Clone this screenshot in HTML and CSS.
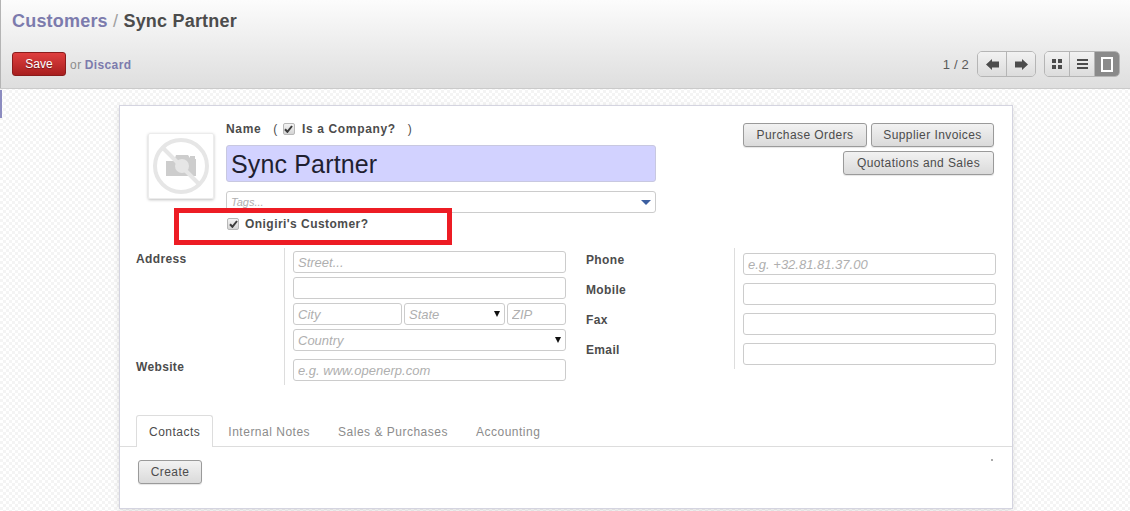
FILE: index.html
```html
<!DOCTYPE html>
<html lang="en">
<head>
  <meta charset="UTF-8">
  <title>Sync Partner</title>
  <link rel="stylesheet" href="styles.css">
</head>
<body>
  <header class="header">
    <h1 class="title"><a class="link">Customers</a> <span class="slash">/</span> Sync Partner</h1>
    <div class="actions">
      <div class="save-group">
        <button class="btn-save">Save</button>
        <span class="or">or</span>
        <a class="link discard">Discard</a>
      </div>
      <div class="pager">
        <span class="pager-text">1 / 2</span>
        <div class="btn-group arrows">
          <button class="tool">
            <svg width="13" height="11" viewBox="0 0 13 11"><path d="M0 5.5 6 0V2.5H13V8.5H6V11Z" fill="#4c4c4c"/></svg>
          </button>
          <button class="tool">
            <svg width="13" height="11" viewBox="0 0 13 11"><path d="M13 5.5 7 0V2.5H0V8.5H7V11Z" fill="#4c4c4c"/></svg>
          </button>
        </div>
        <div class="btn-group views">
          <button class="tool">
            <svg width="10" height="10" viewBox="0 0 10 10" fill="#4c4c4c"><rect width="4" height="4"/><rect x="6" width="4" height="4"/><rect y="6" width="4" height="4"/><rect x="6" y="6" width="4" height="4"/></svg>
          </button>
          <button class="tool">
            <svg width="11" height="10" viewBox="0 0 11 10" fill="#4c4c4c"><rect width="11" height="2"/><rect y="4" width="11" height="2"/><rect y="8" width="11" height="2"/></svg>
          </button>
          <button class="tool active">
            <svg width="12" height="15" viewBox="0 0 12 15"><rect x="1" y="1" width="10" height="13" fill="none" stroke="#fff" stroke-width="2"/></svg>
          </button>
        </div>
      </div>
    </div>
  </header>

  <main class="content">
    <div class="sheet">
      <div class="top">
        <div class="photo">
          <svg width="60" height="60" viewBox="0 0 60 60">
            <path d="M15 25h8l2-6h12l2 3v-2h5v3h1v17H15z" fill="#cdcdcd"/>
            <circle cx="31" cy="30" r="7" fill="#e6e6e6"/>
            <circle cx="30" cy="30" r="26" fill="none" stroke="#e6e6e6" stroke-width="4"/>
            <path d="M12 12 48 48" stroke="#e6e6e6" stroke-width="4"/>
          </svg>
        </div>
        <div class="name-col">
          <div class="name-label">
            <span>Name</span>
            <span class="paren">(</span>
            <span class="check"><svg width="9" height="8" viewBox="0 0 9 8"><path d="M1 4.2 3.4 6.8 8 1" fill="none" stroke="#3c3c3c" stroke-width="2"/></svg></span>
            <span>Is a Company?</span>
            <span class="paren close">)</span>
          </div>
          <input class="name-input" type="text" value="Sync Partner">
          <div class="field tags">
            <span class="hint">Tags...</span>
            <span class="tags-caret"></span>
          </div>
          <div class="custom-row">
            <span class="check"><svg width="9" height="8" viewBox="0 0 9 8"><path d="M1 4.2 3.4 6.8 8 1" fill="none" stroke="#3c3c3c" stroke-width="2"/></svg></span>
            <span>Onigiri's Customer?</span>
          </div>
        </div>
        <div class="smart-buttons">
          <button class="btn">Purchase Orders</button>
          <button class="btn">Supplier Invoices</button>
          <button class="btn">Quotations and Sales</button>
        </div>
        <div class="highlight"></div>
      </div>

      <div class="details">
        <div class="group-left">
          <div class="labels">
            <span class="label">Address</span>
            <span class="label">Website</span>
          </div>
          <div class="fields">
            <input class="field" type="text" placeholder="Street...">
            <input class="field" type="text">
            <div class="city-row">
              <input class="field city" type="text" placeholder="City">
              <div class="field state"><span class="hint">State</span><span class="caret"></span></div>
              <input class="field zip" type="text" placeholder="ZIP">
            </div>
            <div class="field"><span class="hint">Country</span><span class="caret"></span></div>
            <input class="field website" type="text" placeholder="e.g. www.openerp.com">
          </div>
        </div>
        <div class="group-right">
          <div class="labels contact-labels">
            <span class="label">Phone</span>
            <span class="label">Mobile</span>
            <span class="label">Fax</span>
            <span class="label">Email</span>
          </div>
          <div class="fields contact-fields">
            <input class="field" type="text" placeholder="e.g. +32.81.81.37.00">
            <input class="field" type="text">
            <input class="field" type="text">
            <input class="field" type="text">
          </div>
        </div>
      </div>

      <nav class="tabs">
        <a class="tab current">Contacts</a>
        <a class="tab">Internal Notes</a>
        <a class="tab">Sales &amp; Purchases</a>
        <a class="tab">Accounting</a>
      </nav>
      <div class="tab-body">
        <button class="btn create">Create</button>
        <span class="dot"></span>
      </div>
    </div>
  </main>
</body>
</html>
```
FILE: styles.css
```css
* {
  box-sizing: border-box;
}

html, body {
  height: 100%;
}

body {
  margin: 0;
  overflow: hidden;
  font-family: "Liberation Sans", Arial, sans-serif;
  font-size: 13px;
  color: #4c4c4c;
  background-color: #fff;
  background-image: conic-gradient(#f4f4f4 25%, #fff 0 50%, #f4f4f4 0 75%, #fff 0);
  background-size: 6px 6px;
}

button {
  font-family: inherit;
  cursor: pointer;
}

.header {
  height: 89px;
  padding: 11px 10px 0 12px;
  background: linear-gradient(#fcfcfc, #dedede);
  border-bottom: 1px solid #cacaca;
  box-shadow: inset 2px 0 0 -1px #b4b4b4;
}

.title {
  margin: 0;
  font-size: 18px;
  line-height: 21px;
  font-weight: bold;
  letter-spacing: 0.2px;
  color: #4c4c4c;
}

.link {
  color: #7c7bad;
}

.slash {
  color: #a0a0a0;
  font-weight: normal;
}

.actions {
  display: flex;
  justify-content: space-between;
  align-items: center;
  margin-top: 19px;
}

.save-group {
  display: flex;
  align-items: center;
}

.btn-save {
  width: 54px;
  height: 24px;
  padding: 0;
  color: #fff;
  font-size: 12px;
  border: 1px solid #8a1c1c;
  border-radius: 3px;
  background: linear-gradient(#df3f3f, #a81f1f);
  text-shadow: 0 1px 1px rgba(0, 0, 0, 0.4);
}

.or {
  margin-left: 4px;
  margin-top: 1px;
  color: #8c8c8c;
  font-size: 12px;
  letter-spacing: 0.5px;
}

.discard {
  margin-left: 3px;
  margin-top: 1px;
  font-size: 12px;
  font-weight: bold;
  letter-spacing: 0.4px;
}

.pager {
  display: flex;
  align-items: center;
}

.pager-text {
  margin-right: 8px;
  font-size: 13px;
  letter-spacing: 0.2px;
  color: #5a5a5a;
}

.btn-group {
  display: flex;
  height: 26px;
  border: 1px solid #b5b5b5;
  border-radius: 5px;
  overflow: hidden;
}

.arrows {
  width: 59px;
}

.views {
  width: 76px;
  margin-left: 8px;
}

.tool {
  flex: 1;
  display: flex;
  align-items: center;
  justify-content: center;
  padding: 0;
  border: none;
  border-left: 1px solid #b5b5b5;
  background: linear-gradient(#f2f2f2, #dcdcdc);
}

.tool:first-child {
  border-left: none;
}

.tool.active {
  background: #8a8a8a;
}

.content {
  position: relative;
  padding: 16px 117px 0 119px;
}

.content::before {
  content: "";
  position: absolute;
  left: 0;
  top: 1px;
  width: 2px;
  height: 28px;
  background: #8c8cc0;
}

.sheet {
  height: 404px;
  background: #fff;
  border: 1px solid #d4d4e0;
  box-shadow: 0 2px 6px rgba(0, 0, 0, 0.12);
}

.top {
  position: relative;
  display: flex;
  height: 142px;
  padding: 15px 18px 0 28px;
}

.photo {
  display: flex;
  align-items: center;
  justify-content: center;
  width: 66px;
  height: 66px;
  margin-top: 12px;
  border: 1px solid #ececec;
  border-radius: 2px;
  box-shadow: 0 1px 3px rgba(0, 0, 0, 0.25);
}

.name-col {
  width: 430px;
  margin-left: 12px;
}

.name-label {
  display: flex;
  align-items: center;
  height: 15px;
  font-size: 12px;
  font-weight: bold;
  letter-spacing: 0.65px;
}

.paren {
  margin: 0 5px 0 12px;
  font-weight: normal;
}

.paren.close {
  margin: 0 0 0 12px;
}

.check {
  display: inline-flex;
  align-items: center;
  justify-content: center;
  width: 12px;
  height: 12px;
  margin-right: 7px;
  border: 1px solid #b8b8b8;
  border-radius: 2px;
  background: linear-gradient(#f4f4f4, #d4d4d4);
}

.name-input {
  display: block;
  width: 100%;
  height: 37px;
  margin-top: 9px;
  padding: 2px 4px 0;
  font-family: inherit;
  font-size: 25px;
  letter-spacing: 0.15px;
  color: #1f1f30;
  background: #d2d2ff;
  border: 1px solid #c8c8e0;
  border-radius: 3px;
}

.field {
  display: flex;
  align-items: center;
  justify-content: space-between;
  width: 100%;
  height: 22px;
  padding: 0 4px;
  font-family: inherit;
  font-size: 13px;
  color: #4c4c4c;
  background: #fff;
  border: 1px solid #ccc;
  border-radius: 3px;
}

.field::placeholder,
.hint {
  color: #afafaf;
  font-style: italic;
  opacity: 1;
}

.tags {
  margin-top: 9px;
}

.tags .hint {
  font-size: 11px;
}

.tags-caret {
  border-top: 5px solid #3c5fa0;
  border-left: 5px solid transparent;
  border-right: 5px solid transparent;
}

.caret {
  border-top: 6px solid #111;
  border-left: 3.5px solid transparent;
  border-right: 3.5px solid transparent;
}

.custom-row {
  display: flex;
  align-items: center;
  margin-top: 3px;
  padding-left: 1px;
  height: 16px;
  font-size: 12px;
  font-weight: bold;
  letter-spacing: 0.45px;
}

.custom-row .check {
  margin-right: 6px;
}

.smart-buttons {
  display: flex;
  flex-wrap: wrap;
  justify-content: flex-end;
  align-content: flex-start;
  gap: 4px;
  width: 255px;
  margin-top: 2px;
  margin-left: auto;
}

.btn {
  height: 24px;
  padding: 0;
  font-size: 12px;
  letter-spacing: 0.42px;
  white-space: nowrap;
  color: #4c4c4c;
  background: linear-gradient(#f2f2f2, #dadada);
  border: 1px solid #9a9a9a;
  border-radius: 3px;
  box-shadow: 0 1px 1px rgba(0, 0, 0, 0.1);
}

.smart-buttons .btn:nth-child(1) {
  width: 124px;
}

.smart-buttons .btn:nth-child(2) {
  width: 123px;
}

.smart-buttons .btn:nth-child(3) {
  width: 151px;
}

.highlight {
  position: absolute;
  left: 54px;
  top: 102px;
  width: 278px;
  height: 37px;
  border: 5px solid #ed1c24;
}

.details {
  display: flex;
  height: 167px;
  padding: 0 17px 0 16px;
}

.group-left,
.group-right {
  display: flex;
  align-self: flex-start;
}

.labels {
  display: flex;
  flex-direction: column;
  justify-content: space-between;
  width: 148px;
  height: 137px;
  padding: 4px 0 11px;
}

.label {
  font-size: 12px;
  font-weight: bold;
  letter-spacing: 0.35px;
  line-height: 14px;
}

.fields {
  display: flex;
  flex-direction: column;
  gap: 4px;
  width: 282px;
  height: 137px;
  padding: 3px 0 0 8px;
  border-left: 1px solid #ddd;
}

.city-row {
  display: flex;
  gap: 2px;
}

.city {
  width: 109px;
}

.state {
  width: 101px;
}

.zip {
  width: 59px;
}

.website {
  margin-top: 4px;
}

.group-right {
  margin-left: 20px;
}

.contact-labels {
  justify-content: flex-start;
  gap: 16px;
  height: auto;
  padding: 5px 0 0;
}

.contact-fields {
  gap: 8px;
  width: 262px;
  height: 121px;
  padding-top: 5px;
}

.tabs {
  display: flex;
  height: 32px;
  padding-left: 16px;
  border-bottom: 1px solid #ddd;
}

.tab {
  height: 32px;
  padding: 9px 12px 0;
  margin-right: 2px;
  font-size: 12px;
  letter-spacing: 0.5px;
  color: #8c8c8c;
  border: 1px solid transparent;
  border-bottom: none;
}

.tab.current {
  color: #4c4c4c;
  background: #fff;
  border-color: #ddd;
  border-radius: 3px 3px 0 0;
}

.tab-body {
  position: relative;
  padding: 13px 18px;
}

.create {
  width: 64px;
}

.dot {
  position: absolute;
  right: 19px;
  top: 12px;
  width: 2px;
  height: 2px;
  background: #aaa;
}
```
